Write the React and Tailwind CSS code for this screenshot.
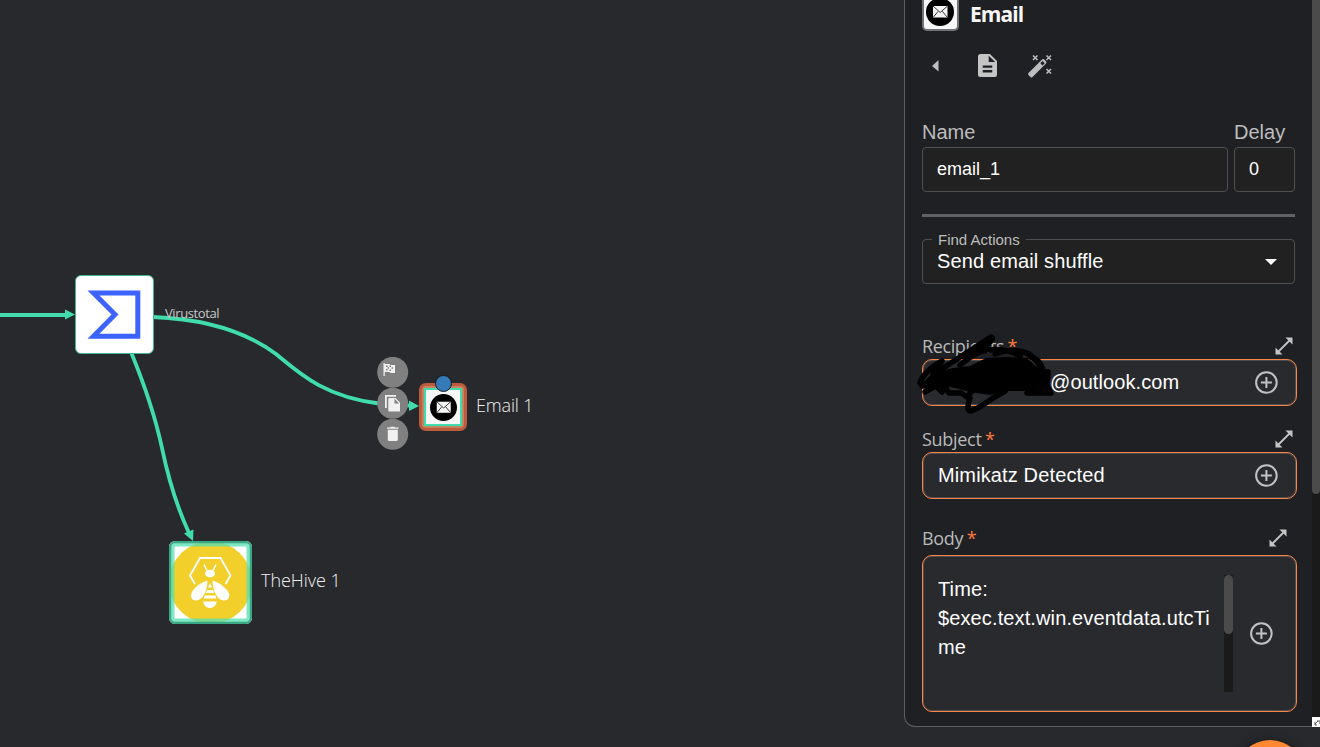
import React from "react";

const panelText = "font-['Liberation_Sans',sans-serif]";

function Mail({ className }) {
  return (
    <svg viewBox="0 0 28 28" className={className}>
      <circle cx="14" cy="14" r="14" fill="#000" />
      <path d="M7 8h14.5v11.5H7z" fill="#f5f5f5" />
      <path d="M7 8l7.2 6.5L21.5 8M7 19.5l5.2-6.2M21.5 19.5l-5.2-6.2" fill="none" stroke="#222" strokeWidth="0.9" />
    </svg>
  );
}

function Expand() {
  return (
    <svg viewBox="0 0 18 18" className="h-[18px] w-[18px]">
      <path d="M10.500 0.500H17.500V7.500zM0.500 10.500V17.500H7.500z" fill="#c4c4c4" />
      <path d="M3 15L15 3" stroke="#c4c4c4" strokeWidth="1.800" />
    </svg>
  );
}

function Plus() {
  return (
    <svg viewBox="0 0 24 24" className="h-6 w-6 shrink-0">
      <circle cx="12.400" cy="11.500" r="10.300" fill="none" stroke="#c2c2c3" strokeWidth="2" />
      <path d="M12.400 6v11M6.900 11.500h11" stroke="#c2c2c3" strokeWidth="2" />
    </svg>
  );
}

function FieldLabel({ text, pad, spacing }) {
  return (
    <div className={"flex h-[26px] items-center justify-between " + pad}>
      <div className={"font-['Open_Sans',sans-serif] text-[18px] leading-[26px] text-[#b9b9b9] " + spacing}>
        {text} <span className="-ml-px text-[#ff7a3d]">*</span>
      </div>
      <Expand />
    </div>
  );
}

function Canvas() {
  return (
    <main className="relative h-[747px] w-[904px] shrink-0 overflow-hidden">
      <svg viewBox="0 0 904 747" className="absolute inset-0 h-full w-full">
        <g fill="none" stroke="#41dcab" strokeWidth="3.8">
          <path d="M0 315H67" />
          <path d="M153 317C205 319 245 331 276 354C300 374 325 397 379 403.500" />
          <path d="M131 352C147 391 156 420 162 448C169 482 177 507 189 533" />
          <path d="M406 405.500H411" />
        </g>
        <g fill="#41dcab">
          <path d="M65 309.500L75 314.500L65 319.500z" />
          <path d="M409 400.500L419 406L409 411z" />
          <path d="M184 533.500L193.500 529.500L193 541z" />
        </g>
      </svg>

      <div className="absolute left-[75px] top-[275px] h-[79px] w-[79px] rounded-[6px] border border-[#41b592] bg-white">
        <svg viewBox="0 0 77 77" className="h-full w-full">
          <path d="M17.500 17H61.800V60.300H17.500L39 38.500z" fill="none" stroke="#3d63ff" strokeWidth="5" />
        </svg>
      </div>
      <div className="absolute left-[165px] top-[304px] font-['Open_Sans',sans-serif] text-[13px] leading-[18px] tracking-[-0.4px] text-[#c9c9ca]">Virustotal</div>

      <div className="absolute left-[419px] top-[383px] flex h-12 w-12 items-center justify-center rounded-[7px] border-[3px] border-[#bd5b3f] bg-[#c58560]">
        <div className="flex h-[38px] w-[38px] shrink-0 items-center justify-center border-[2px] border-[#41dcab] bg-[#f6f6f6]">
          <Mail className="h-[27px] w-[27px]" />
        </div>
      </div>
      <div className="absolute left-[435px] top-[375px] h-[17px] w-[17px] rounded-full border border-[#17191c] bg-[#337ab7]" />
      <div className="absolute left-[476px] top-[393px] font-['Open_Sans',sans-serif] text-[18px] leading-6 font-light tracking-[-0.15px] text-[#f0f0f0]">Email 1</div>

      <svg viewBox="0 0 32 94" className="absolute left-[377px] top-[357px] h-[94px] w-8">
        <g fill="#808080">
          <circle cx="15.700" cy="15.300" r="15.500" />
          <circle cx="15.700" cy="46.300" r="15.500" />
          <circle cx="15.700" cy="77.300" r="15.500" />
        </g>
        <g fill="#f1f1f1">
          <path d="M6.500 6h1.300v1h4.700l1 1H18v8h-4.500l-1-1H7.800v4H6.500z" />
          <path d="M8 38h11v1.800H9.800V51H8z" />
          <path d="M12.300 41h6.200l4.500 4.500V54.500H12.300a1 1 0 0 1-1-1V42a1 1 0 0 1 1-1z" />
          <path d="M10 71.800V70.500h3.200l.8-.8h3.500l.8.800h3.200v1.300zM10.800 72.800h10v9.700a1.500 1.500 0 0 1-1.500 1.500h-7a1.500 1.500 0 0 1-1.500-1.500z" />
        </g>
        <path d="M17.500 41.800v4.600h4.600z" fill="#808080" />
        <path d="M9 8.500h1.500v1.500H9zM12.500 8.500h1.500v1.500h-1.500zM10.500 10.200h1.500v1.500h-1.500zM14.500 10.200h1.500v1.500h-1.500zM9 12h1.500v1.500H9zM12.500 12.500h1.500v1.500h-1.500z" fill="#808080" />
      </svg>

      <div className="absolute left-[169px] top-[541px] h-[83px] w-[83px] overflow-hidden rounded-[6px] bg-white">
        <svg viewBox="0 0 83 83" className="h-full w-full">
          <circle cx="41.500" cy="41.500" r="41.500" fill="#f3cf2c" />
          <rect x="3" y="3" width="77" height="77" rx="3" fill="none" stroke="#55dfb1" strokeOpacity="0.75" strokeWidth="5" />
          <rect x="1" y="1" width="81" height="81" rx="5" fill="none" stroke="#3ba783" strokeWidth="2.500" />
          <path d="M26 43L21 34.500L31 17H51.500L61.500 34.500L56.500 43" fill="none" stroke="#fff" strokeWidth="1.800" />
          <path d="M35 23.500L38 29.500M47 23.500L44 29.500" fill="none" stroke="#fff" strokeWidth="1.500" />
          <ellipse cx="41" cy="32.500" rx="5" ry="3.800" fill="#fff" />
          <path d="M38.500 39.500C38.500 50 33 59.500 27.500 59.500C21 59.500 20 53 26 47C30 43 34 41 38.500 39.500zM43.500 39.500C43.500 50 49 59.500 54.500 59.500C61 59.500 63 53 56 47C52 43 48 41 43.500 39.500z" fill="#fff" />
          <path d="M41 42L43 46.500H39zM38 49H44L45.500 52H36.500zM35.500 54.500H46.500L47.500 57.500H34.500zM34.200 60.500H47.800C47 65 44 67 41 67C38 67 35 65 34.200 60.500z" fill="#fff" />
        </svg>
      </div>
      <div className="absolute left-[261px] top-[568px] font-['Open_Sans',sans-serif] text-[18px] leading-6 font-light tracking-[-0.05px] text-[#f0f0f0]">TheHive 1</div>
    </main>
  );
}

function ActionPanel() {
  return (
    <aside className={"relative flex h-[727px] w-[408px] flex-col rounded-bl-[11px] border-b border-l border-[#5b5f65] bg-[#1f2024] pl-[17px] pr-[15px] " + panelText}>
      <header className="flex h-[31px] items-start">
        <div className="flex h-[31px] w-[37px] shrink-0 items-start justify-center rounded-b-[5px] border-2 border-t-0 border-[#707275] bg-[#f7f7f7]">
          <Mail className="-ml-px -mt-[2px] h-7 w-7" />
        </div>
        <h1 className="ml-[11px] font-['Open_Sans',sans-serif] text-[21px] leading-7 font-bold tracking-[-0.9px] text-[#f7f7f7]">Email</h1>
      </header>
      <div className="flex h-[91px] items-start pt-[22px]">
        <svg viewBox="0 0 8 12" className="ml-[9px] mt-[7px] h-3 w-2"><path d="M7.500 0V11.500L1 6z" fill="#bdbdbd" /></svg>
        <svg viewBox="4 2 16 20" className="ml-[39px] mt-px h-[23px] w-[19px]" preserveAspectRatio="none">
          <path d="M14 2H6c-1.100 0-2 .9-2 2v16c0 1.100.9 2 2 2h12c1.100 0 2-.9 2-2V8zm2 16H8v-2h8zm0-4H8v-2h8zm-3-5V3.500L18.500 9z" fill="#c4c4c4" />
        </svg>
        <svg viewBox="0 0 26 26" className="ml-[30px] h-[26px] w-[26px]">
          <path d="M1.500 20L15 6.500Q16.500 5.500 17.500 6.700L19 8.200Q20 9.500 19 10.500L5.500 24Q4.500 25 3.500 24L1.500 22Q.5 21 1.500 20z" fill="#bdbdbd" />
          <path d="M15.500 8L17.700 10.200L15.500 12.400L13.300 10.200z" fill="#1f2024" />
          <path d="M6 2.500l4.500 4.500M10.500 2.500l-4.500 4.500M19.500 2.500l4.500 4.500M24 2.500l-4.500 4.500M19.500 16l4.500 4.500M24 16l-4.500 4.500" stroke="#bdbdbd" strokeWidth="1.500" />
        </svg>
      </div>
      <div className="flex gap-[6px] text-[#bdbdbd]">
        <label className="flex w-[306px] flex-col">
          <span className="h-[25px] text-[20px] leading-[21px]">Name</span>
          <span className="h-[45px] rounded border border-[#505050] bg-[#212121] px-[14px] text-[18px] leading-[42px] text-white">email_1</span>
        </label>
        <label className="flex w-[61px] flex-col">
          <span className="h-[25px] text-[20px] leading-[21px]">Delay</span>
          <span className="h-[45px] rounded border border-[#505050] bg-[#212121] px-[14px] text-[18px] leading-[42px] text-white">0</span>
        </label>
      </div>
      <hr className="mt-[22px] h-[3px] w-[373px] shrink-0 border-0 bg-[#5f6368]" />
      <div className="relative mt-[22px] flex h-[45px] w-[373px] shrink-0 items-center justify-between rounded border border-[#505050] bg-[#212121] pl-[14px] pr-[17px]">
        <span className="absolute -top-[9px] left-[9px] bg-[linear-gradient(#1f2024_50%,#212121_50%)] px-[6px] text-[15px] leading-[18px] text-[#bdbdbd]">Find Actions</span>
        <span className="-mt-[2px] text-[20px] leading-6 tracking-[0.13px]">Send email shuffle</span>
        <svg viewBox="0 0 12 6" className="mt-px h-[6px] w-3"><path d="M0 0H12L6 6z" fill="#fff" /></svg>
      </div>

      <div className="mt-[49px]"><FieldLabel text="Recipients" pad="pr-[4px]" spacing="tracking-[-0.4px]" /></div>
      <div className="relative flex h-[47px] w-[375px] shrink-0 items-center justify-between rounded-[10px] border border-[#ff8544] bg-[#292a2e] pl-[127px] pr-[18px] shadow-[inset_0_0_0_1px_#4b4d51]">
        <span className="-mt-[2px] text-[20px] leading-6 tracking-[0.1px]">@outlook.com</span>
        <Plus />
        <svg viewBox="0 0 150 90" className="absolute -left-[13px] -top-[30px] h-[90px] w-[150px]">
          <path d="M12 54L22 43L43 38L60 36L76 28L96 27L117 28L130 40L137 46L137 60L118 61L97 61L80 65L60 62L45 58L33 56L17 60z" fill="#000" />
          <path d="M10 53Q13 42 32 31L23 44M15 62Q20 59 26 56L32 62L34 55L39 63H51L57 67L63 60M27 42L81 7Q85 8 78 14L54 32M50 35Q65 22 77 20Q98 18 110 26M85 24Q105 17 119 24Q130 32 132 42M120 27Q131 29 133 42L138 42L137 56L141 63H117L123 57M60 68Q56 80 60 81Q65 81 83 68L95 61M12 56L25 49" fill="none" stroke="#000" strokeWidth="5.500" strokeLinecap="round" strokeLinejoin="round" />
        </svg>
      </div>
      <div className="mt-[20px]"><FieldLabel text="Subject" pad="pr-[4px]" spacing="tracking-[-0.3px]" /></div>
      <div className="flex h-[47px] w-[375px] shrink-0 items-center justify-between rounded-[10px] border border-[#ff8544] bg-[#292a2e] pl-[15px] pr-[18px] shadow-[inset_0_0_0_1px_#4b4d51]">
        <span className="-mt-[2px] text-[20px] leading-6 tracking-[0.13px]">Mimikatz Detected</span>
        <Plus />
      </div>
      <div className="mt-[26px]"><FieldLabel text="Body" pad="pr-[10px]" spacing="tracking-[-0.3px]" /></div>
      <div className="mt-[4px] flex h-[157px] w-[375px] shrink-0 items-start rounded-[10px] border border-[#ff8544] bg-[#292a2e] pl-[15px] pt-[19px] shadow-[inset_0_0_0_1px_#4b4d51]">
        <p className="w-[286px] text-[20px] leading-[29px] tracking-[0.12px]">Time:<br />$exec.text.win.eventdata.utcTi<br />me</p>
        <div className="h-[117px] w-[9px] bg-[#1a1a1a]"><div className="h-[59px] w-[9px] rounded-[5px] bg-[#4b4b4b]" /></div>
        <div className="ml-[16px] mt-[47px]"><Plus /></div>
      </div>
    </aside>
  );
}

export default function App() {
  return (
    <div className="relative flex h-[747px] w-[1320px] overflow-hidden bg-[#28292d] text-white">
      <Canvas />
      <ActionPanel />
      <div className="flex h-[727px] w-2 flex-col bg-[#1a1a1a]">
        <div className="h-[494px] rounded-b-[4px] bg-[#4b4b4b]" />
        <svg viewBox="0 0 8 10" className="mt-auto h-[10px] w-2 bg-white"><path d="M3 7L6 4M5 4h3v3M3 5v3h2" fill="none" stroke="#555" strokeWidth="1" /></svg>
      </div>
      <div className="absolute left-[1235px] top-[740px] h-[70px] w-[70px] rounded-full bg-[#ff8731] shadow-[0_0_8px_#1a1a1a]" />
    </div>
  );
}
